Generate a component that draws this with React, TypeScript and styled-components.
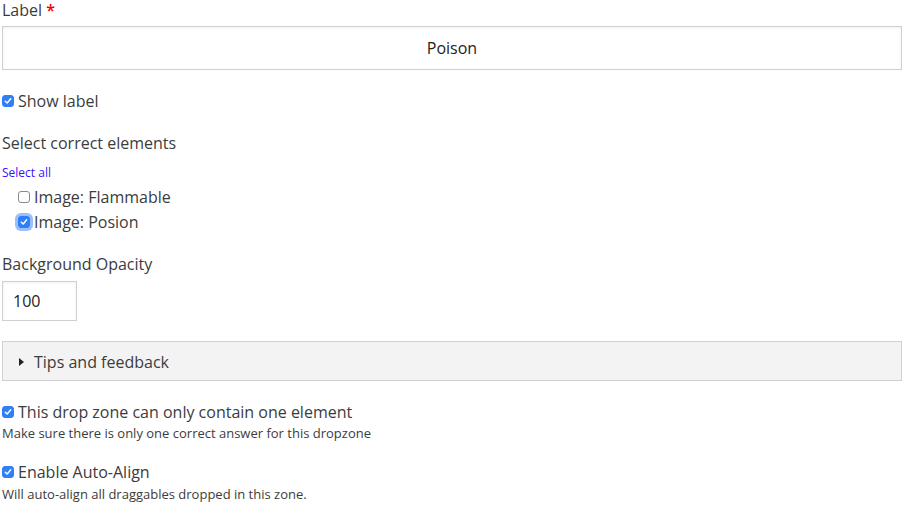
import React from "react";
import styled, { createGlobalStyle } from "styled-components";

const Global = createGlobalStyle`
  html, body { margin: 0; padding: 0; background: #fff; }
  body { font-family: "Open Sans", "Liberation Sans", sans-serif; color: #3c3c3c; }
  * { box-sizing: border-box; }
`;

const Page = styled.div`
  width: 908px;
  padding: 0 6px 0 2px;
  display: flex;
  flex-direction: column;
`;

const FieldLabel = styled.div<{ $mt?: number; $mb?: number }>`
  font-size: 16px;
  line-height: 20px;
  color: #3c3c3c;
  margin-top: ${(p) => p.$mt ?? 0}px;
  margin-bottom: ${(p) => p.$mb ?? 0}px;
`;

const Req = styled.span`
  color: #e00;
  font-weight: 600;
`;

const TextBox = styled.div<{ $w?: string; $h: number; $align?: string; $pl?: number }>`
  width: ${(p) => p.$w ?? "100%"};
  height: ${(p) => p.$h}px;
  border: 1px solid #d0d0d0;
  background: #fff;
  box-shadow: inset 0 1px 3px rgba(0, 0, 0, 0.06);
  display: flex;
  align-items: center;
  justify-content: ${(p) => p.$align ?? "flex-start"};
  padding-left: ${(p) => p.$pl ?? 0}px;
  font-size: 16px;
  color: #222;
`;

const CheckRow = styled.label<{ $mt?: number; $indent?: number }>`
  display: flex;
  align-items: center;
  gap: 4px;
  margin-top: ${(p) => p.$mt ?? 0}px;
  padding-left: ${(p) => p.$indent ?? 0}px;
  font-size: 16px;
  line-height: 20px;
  color: #3c3c3c;
`;

const Box = styled.span<{ $checked: boolean; $focus?: boolean }>`
  width: 12px;
  height: 12px;
  flex: none;
  border-radius: 3px;
  display: inline-flex;
  align-items: center;
  justify-content: center;
  background: ${(p) => (p.$checked ? "#2f7ff7" : "#fff")};
  border: 1px solid ${(p) => (p.$checked ? "#2f7ff7" : "#8a8a8a")};
  box-shadow: ${(p) => (p.$focus ? "0 0 0 3px rgba(70,140,245,0.55)" : "none")};
`;

const Check = ({ checked, focus }: { checked: boolean; focus?: boolean }) => (
  <Box $checked={checked} $focus={focus}>
    {checked && (
      <svg width="8" height="8" viewBox="0 0 8 8">
        <path d="M1.3 4.2 L3.2 6 L6.7 1.8" fill="none" stroke="#fff" strokeWidth="1.5" strokeLinecap="round" strokeLinejoin="round" />
      </svg>
    )}
  </Box>
);

const LinkText = styled.a`
  font-size: 12px;
  line-height: 16px;
  color: #3b10ff;
  text-decoration: none;
  margin-top: 12px;
  align-self: flex-start;
`;

const Accordion = styled.div`
  height: 40px;
  margin-top: 20px;
  border: 1px solid #d0d0d0;
  background: #f3f3f3;
  display: flex;
  align-items: center;
  gap: 10px;
  padding: 2px 0 0 16px;
  font-size: 16px;
  color: #3c3c3c;
`;

const Caret = styled.span`
  width: 0;
  height: 0;
  border-top: 4px solid transparent;
  border-bottom: 4px solid transparent;
  border-left: 5px solid #222;
`;

const Desc = styled.div<{ $mt: number }>`
  font-size: 13px;
  line-height: 16px;
  color: #3c3c3c;
  margin-top: ${(p) => p.$mt}px;
`;

export default function App() {
  return (
    <>
      <Global />
      <Page>
        <FieldLabel $mb={6}>
          Label <Req>*</Req>
        </FieldLabel>
        <TextBox $h={44} $align="center">Poison</TextBox>

        <CheckRow $mt={21}>
          <Check checked />
          Show label
        </CheckRow>

        <FieldLabel $mt={22}>Select correct elements</FieldLabel>
        <LinkText href="#">Select all</LinkText>
        <CheckRow $mt={6} $indent={16}>
          <Check checked={false} />
          Image: Flammable
        </CheckRow>
        <CheckRow $mt={5} $indent={16}>
          <Check checked focus />
          Image: Posion
        </CheckRow>

        <FieldLabel $mt={22} $mb={7}>Background Opacity</FieldLabel>
        <TextBox $w="75px" $h={40} $pl={10}>100</TextBox>

        <Accordion>
          <Caret />
          Tips and feedback
        </Accordion>

        <CheckRow $mt={21}>
          <Check checked />
          This drop zone can only contain one element
        </CheckRow>
        <Desc $mt={3}>Make sure there is only one correct answer for this dropzone</Desc>

        <CheckRow $mt={21}>
          <Check checked />
          Enable Auto-Align
        </CheckRow>
        <Desc $mt={4}>Will auto-align all draggables dropped in this zone.</Desc>
      </Page>
    </>
  );
}
